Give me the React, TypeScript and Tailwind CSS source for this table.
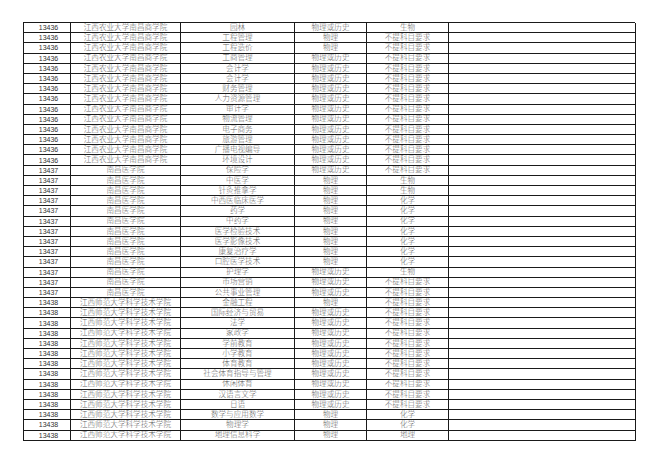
const S1 = '江西农业大学南昌商学院';
const S2 = '南昌医学院';
const S3 = '江西师范大学科学技术学院';
const BOTH = '物理或历史';
const WL = '物理';
const NONE = '不提科目要求';

type Row = [string, string, string, string, string];

const rows: Row[] = [
  ['13436', S1, '园林', BOTH, '生物'],
  ['13436', S1, '工程管理', WL, NONE],
  ['13436', S1, '工程造价', WL, NONE],
  ['13436', S1, '工商管理', BOTH, NONE],
  ['13436', S1, '会计学', BOTH, NONE],
  ['13436', S1, '会计学', BOTH, NONE],
  ['13436', S1, '财务管理', BOTH, NONE],
  ['13436', S1, '人力资源管理', BOTH, NONE],
  ['13436', S1, '审计学', BOTH, NONE],
  ['13436', S1, '物流管理', BOTH, NONE],
  ['13436', S1, '电子商务', BOTH, NONE],
  ['13436', S1, '旅游管理', BOTH, NONE],
  ['13436', S1, '广播电视编导', BOTH, NONE],
  ['13436', S1, '环境设计', BOTH, NONE],
  ['13437', S2, '保险学', BOTH, NONE],
  ['13437', S2, '中医学', WL, '生物'],
  ['13437', S2, '针灸推拿学', WL, '生物'],
  ['13437', S2, '中西医临床医学', WL, '化学'],
  ['13437', S2, '药学', WL, '化学'],
  ['13437', S2, '中药学', WL, '化学'],
  ['13437', S2, '医学检验技术', WL, '化学'],
  ['13437', S2, '医学影像技术', WL, '化学'],
  ['13437', S2, '康复治疗学', WL, '化学'],
  ['13437', S2, '口腔医学技术', WL, '化学'],
  ['13437', S2, '护理学', BOTH, '生物'],
  ['13437', S2, '市场营销', BOTH, NONE],
  ['13437', S2, '公共事业管理', BOTH, NONE],
  ['13438', S3, '金融工程', WL, NONE],
  ['13438', S3, '国际经济与贸易', BOTH, NONE],
  ['13438', S3, '法学', BOTH, NONE],
  ['13438', S3, '家政学', BOTH, NONE],
  ['13438', S3, '学前教育', BOTH, NONE],
  ['13438', S3, '小学教育', BOTH, NONE],
  ['13438', S3, '体育教育', BOTH, NONE],
  ['13438', S3, '社会体育指导与管理', BOTH, NONE],
  ['13438', S3, '休闲体育', BOTH, NONE],
  ['13438', S3, '汉语言文学', BOTH, NONE],
  ['13438', S3, '日语', BOTH, NONE],
  ['13438', S3, '数学与应用数学', WL, '化学'],
  ['13438', S3, '物理学', WL, '化学'],
  ['13438', S3, '地理信息科学', WL, '地理'],
];

const cjk = "font-['Liberation_Serif','Noto_Sans_CJK_SC',serif] text-[7.6px] text-[#666] font-light";
const cell = 'flex items-center justify-center border-r border-b border-[#1a1a1a] overflow-hidden whitespace-nowrap leading-none';

export default function App() {
  return (
    <div className="w-[660px] h-[466px] bg-white overflow-hidden">
      <div className="ml-[23px] mt-[22px] w-[612px] border-l border-t border-[#1a1a1a]">
        {rows.map((r, i) => (
          <div key={i} className="grid grid-cols-[47px_110px_114px_72px_82px_187px] h-[10.2px]">
            <div className={`${cell} font-['Liberation_Sans',sans-serif] text-[7px] text-[#333] pl-[3px]`}>{r[0]}</div>
            <div className={`${cell} ${cjk}`}>{r[1]}</div>
            <div className={`${cell} ${cjk}`}>{r[2]}</div>
            <div className={`${cell} ${cjk}`}>{r[3]}</div>
            <div className={`${cell} ${cjk}`}>{r[4]}</div>
            <div className={cell}></div>
          </div>
        ))}
      </div>
    </div>
  );
}
